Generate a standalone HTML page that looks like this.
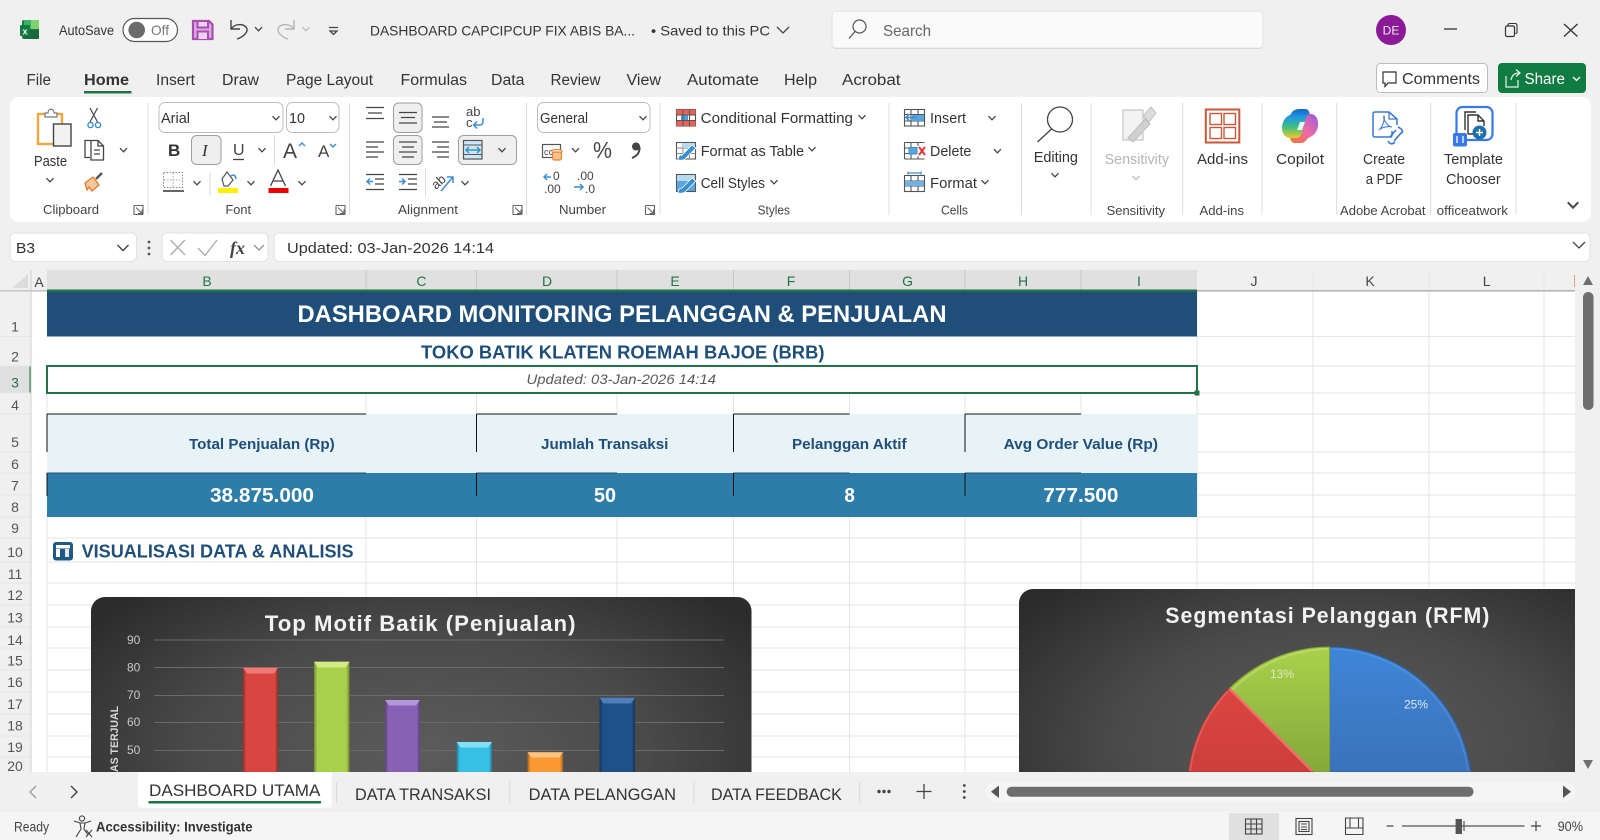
<!DOCTYPE html>
<html lang="en">
<head>
<meta charset="utf-8">
<title>DASHBOARD CAPCIPCUP - Excel</title>
<style>
html,body{margin:0;padding:0;width:1600px;height:840px;overflow:hidden;background:#f0f0f0}
svg{display:block}
text{font-family:"Liberation Sans",Arial,sans-serif;fill:#333;white-space:pre}
.s{font-size:14px}
.m{font-size:15.5px}
.r{font-size:15px}
.g{font-size:13px;fill:#444}
.h{font-size:14px;fill:#444;text-anchor:middle}
.hs{font-size:14px;fill:#217346;text-anchor:middle}
.n{font-size:14px;fill:#555;text-anchor:middle}
.b{font-weight:bold}
.kh{font-size:14.5px;font-weight:bold;fill:#1f4e79}
.kv{font-size:20px;font-weight:bold;fill:#fff}
.ax{font-size:12px;fill:#c8c8c8}
.tab{font-size:17px;fill:#333}
.ln{fill:none;stroke:#444;stroke-width:1.3}
.bl{fill:none;stroke:#3a8fd0;stroke-width:1.5}
</style>
</head>
<body>
<svg xmlns="http://www.w3.org/2000/svg" width="1600" height="840" viewBox="0 0 1600 840">
<defs>
<path id="ch" d="M-3.5 -1.8 L0 1.8 L3.5 -1.8" fill="none" stroke="#444" stroke-width="1.3"/>
<path id="chg" d="M-3.5 -1.8 L0 1.8 L3.5 -1.8" fill="none" stroke="#bbb" stroke-width="1.2"/>
<path id="lau" d="M0 0 H9 V9 M0 0 V9 H9 M2 2 L8 8 M8 4 V8 H4" fill="none" stroke="#666" stroke-width="1.1"/>
<radialGradient id="cbg1" gradientUnits="userSpaceOnUse" cx="0" cy="0" r="1" gradientTransform="translate(421 752) scale(410 214)">
<stop offset="0" stop-color="#5c5c5c"/><stop offset=".55" stop-color="#4a4a4a"/><stop offset="1" stop-color="#2c2c2c"/>
</radialGradient>
<radialGradient id="cbg2" gradientUnits="userSpaceOnUse" cx="0" cy="0" r="1" gradientTransform="translate(1330 744) scale(386 214)">
<stop offset="0" stop-color="#5c5c5c"/><stop offset=".55" stop-color="#4a4a4a"/><stop offset="1" stop-color="#2c2c2c"/>
</radialGradient>
<linearGradient id="edge" x1="0" x2="1" y1="0" y2="0">
<stop offset="0" stop-color="#000" stop-opacity=".34"/><stop offset=".09" stop-color="#000" stop-opacity="0"/>
<stop offset=".91" stop-color="#000" stop-opacity="0"/><stop offset="1" stop-color="#000" stop-opacity=".34"/>
</linearGradient>
<linearGradient id="pb" x1="0" x2="0" y1="0" y2="1"><stop offset="0" stop-color="#3f86d8"/><stop offset="1" stop-color="#3a72ba"/></linearGradient>
<linearGradient id="pg" x1="0" x2="0" y1="0" y2="1"><stop offset="0" stop-color="#aad14c"/><stop offset="1" stop-color="#86a83a"/></linearGradient>
<linearGradient id="pr" x1="0" x2="0" y1="0" y2="1"><stop offset="0" stop-color="#dc4540"/><stop offset="1" stop-color="#cc3f3c"/></linearGradient>
<linearGradient id="ca" x1="0" x2="0" y1="0" y2="1"><stop offset="0" stop-color="#1565c8"/><stop offset=".25" stop-color="#1f9ae0"/><stop offset=".55" stop-color="#45c27a"/><stop offset=".85" stop-color="#ecc92e"/><stop offset="1" stop-color="#f08b2b"/></linearGradient>
<linearGradient id="cb" x1="1" x2="0" y1="0" y2="1"><stop offset="0" stop-color="#9a5bde"/><stop offset=".5" stop-color="#ef6aa6"/><stop offset="1" stop-color="#f4772f"/></linearGradient>
<clipPath id="sheet"><rect x="47" y="292" width="1528" height="480"/></clipPath>
</defs>

<rect width="1600" height="840" fill="#f0f0f0"/>

<!-- Title bar -->
<rect x="22" y="20" width="17" height="19" rx="2" fill="#1d7a45"/>
<rect x="30" y="20" width="9" height="9" rx="1" fill="#7ed26f"/>
<rect x="24" y="20" width="7" height="9" fill="#3fb061"/>
<rect x="24" y="30" width="15" height="9" rx="1" fill="#1a6a3e"/>
<rect x="20" y="25" width="10" height="11" rx="1" fill="#117a43"/>
<text x="22.5" y="34.5" style="font-size:9px;font-weight:bold;fill:#fff">x</text>
<text class="s" x="59" y="35" textLength="55" lengthAdjust="spacingAndGlyphs">AutoSave</text>
<rect x="123" y="18.5" width="54.5" height="23" rx="11.5" fill="#fff" stroke="#555" stroke-width="1.2"/>
<circle cx="136.7" cy="30" r="8.3" fill="#6b6b6b"/>
<text x="151" y="35" style="font-size:14px;fill:#777" textLength="18" lengthAdjust="spacingAndGlyphs">Off</text>
<path d="M193 21 H209 L212.5 24.5 V39 H193 Z" fill="#dba9e2" stroke="#a94db2" stroke-width="2.2"/>
<path d="M197.5 21 H208 V27.5 H197.5 Z M197.5 39 V31.5 H208 V39" fill="#eed4f1" stroke="#a94db2" stroke-width="2"/>
<path d="M231 20 V29 H240 M231 29 C236 22 247 24 247 30 C247 33 243 37 237 39" fill="none" stroke="#444" stroke-width="1.4"/>
<use href="#ch" x="258.5" y="29"/>
<path d="M294 20 V29 H285 M294 29 C289 22 278 24 278 30 C278 33 282 37 288 39" fill="none" stroke="#b5b5b5" stroke-width="1.4"/>
<use href="#chg" x="306" y="29"/>
<path d="M329 27.5 H338 M330 31 H337 L333.5 34.5 Z" fill="none" stroke="#444" stroke-width="1.3"/>
<text class="s" x="370" y="35.5" textLength="265" lengthAdjust="spacingAndGlyphs">DASHBOARD CAPCIPCUP FIX ABIS BA...</text>
<text class="s" x="651" y="35.5" textLength="119" lengthAdjust="spacingAndGlyphs">• Saved to this PC</text>
<path d="M777 27 L783 33 L789 27" fill="none" stroke="#444" stroke-width="1.3"/>

<rect x="832" y="12" width="431" height="37" rx="4" fill="#d0d0d0"/>
<rect x="832" y="11" width="431" height="37" rx="4" fill="#fafafa" stroke="#e2e2e2"/>
<circle cx="859.5" cy="26.5" r="6.5" fill="none" stroke="#555" stroke-width="1.2"/>
<path d="M855 31.5 L849 38.5" stroke="#555" stroke-width="1.3"/>
<text x="883" y="36" style="font-size:16px;fill:#666" textLength="48" lengthAdjust="spacingAndGlyphs">Search</text>
<circle cx="1391" cy="30" r="15" fill="#8a1a98"/>
<text x="1391" y="34.5" style="font-size:12px;fill:#eee;text-anchor:middle">DE</text>
<path d="M1444 29 H1457" stroke="#333" stroke-width="1.3"/>
<rect x="1505.5" y="26" width="9" height="10.5" rx="1.5" fill="none" stroke="#333" stroke-width="1.2"/>
<path d="M1508 25.5 V24.8 Q1508 23.5 1510 23.5 H1515 Q1517 23.5 1517 25.5 V32 Q1517 33.5 1515.5 33.5" fill="none" stroke="#333" stroke-width="1.1"/>
<path d="M1564 24 L1577.5 36.5 M1577.5 24 L1564 36.5" stroke="#333" stroke-width="1.3"/>

<!-- Menu -->
<text class="m" x="26.5" y="85" textLength="24.5" lengthAdjust="spacingAndGlyphs">File</text>
<text class="m b" x="84" y="85" textLength="45" lengthAdjust="spacingAndGlyphs">Home</text>
<rect x="84" y="91" width="47.5" height="2.5" fill="#217346"/>
<text class="m" x="156" y="85" textLength="39" lengthAdjust="spacingAndGlyphs">Insert</text>
<text class="m" x="222" y="85" textLength="37" lengthAdjust="spacingAndGlyphs">Draw</text>
<text class="m" x="286" y="85" textLength="87" lengthAdjust="spacingAndGlyphs">Page Layout</text>
<text class="m" x="400.5" y="85" textLength="66.5" lengthAdjust="spacingAndGlyphs">Formulas</text>
<text class="m" x="491" y="85" textLength="33.5" lengthAdjust="spacingAndGlyphs">Data</text>
<text class="m" x="550.5" y="85" textLength="50" lengthAdjust="spacingAndGlyphs">Review</text>
<text class="m" x="626.5" y="85" textLength="34.5" lengthAdjust="spacingAndGlyphs">View</text>
<text class="m" x="687" y="85" textLength="72" lengthAdjust="spacingAndGlyphs">Automate</text>
<text class="m" x="784" y="85" textLength="33" lengthAdjust="spacingAndGlyphs">Help</text>
<text class="m" x="842" y="85" textLength="58.5" lengthAdjust="spacingAndGlyphs">Acrobat</text>

<rect x="1376.5" y="63.5" width="111" height="29" rx="4" fill="#fff" stroke="#bdbdbd"/>
<path d="M1383 72 H1396 V83 H1388 L1385 86.5 V83 H1383 Z" fill="none" stroke="#333" stroke-width="1.2"/>
<text class="m" x="1402" y="84" textLength="78" lengthAdjust="spacingAndGlyphs">Comments</text>
<rect x="1498" y="63" width="88" height="30" rx="4" fill="#107c41"/>
<path d="M1506 76 V87 H1518 V80 M1511 80 C1512 75 1515 73 1519 73 M1516 69.5 L1520 73 L1516 76.5" fill="none" stroke="#e8f3ec" stroke-width="1.2"/>
<text class="m" x="1524.5" y="84" style="fill:#fff" textLength="40.5" lengthAdjust="spacingAndGlyphs">Share</text>
<path d="M1573 77 L1576.5 80.5 L1580 77" fill="none" stroke="#fff" stroke-width="1.3"/>

<!-- Ribbon -->
<rect x="10" y="97" width="1581" height="125" rx="9" fill="#fff"/>
<g stroke="#dcdcdc" stroke-width="1">
<path d="M148 103 V215 M349.5 103 V215 M526.5 103 V215 M660 103 V215 M889 103 V215 M1021.5 103 V215 M1091 103 V215 M1182.6 103 V215 M1262 103 V215 M1336.7 103 V215 M1430.6 103 V215 M1516 103 V215"/>
<path d="M274.5 135 V165 M210 172 V196 M425.5 168 V196"/>
</g>
<g class="gl">
<text class="g" x="43" y="214" textLength="56" lengthAdjust="spacingAndGlyphs">Clipboard</text>
<text class="g" x="225.5" y="214" textLength="25.5" lengthAdjust="spacingAndGlyphs">Font</text>
<text class="g" x="398" y="214" textLength="60" lengthAdjust="spacingAndGlyphs">Alignment</text>
<text class="g" x="559" y="214" textLength="47" lengthAdjust="spacingAndGlyphs">Number</text>
<text class="g" x="757.6" y="214.5" textLength="32.4" lengthAdjust="spacingAndGlyphs">Styles</text>
<text class="g" x="941" y="214.5" textLength="27" lengthAdjust="spacingAndGlyphs">Cells</text>
<text class="g" x="1106.6" y="215" textLength="58.4" lengthAdjust="spacingAndGlyphs">Sensitivity</text>
<text class="g" x="1199.5" y="215" textLength="44.5" lengthAdjust="spacingAndGlyphs">Add-ins</text>
<text class="g" x="1340" y="215" textLength="85.5" lengthAdjust="spacingAndGlyphs">Adobe Acrobat</text>
<text class="g" x="1436.7" y="215" textLength="71.3" lengthAdjust="spacingAndGlyphs">officeatwork</text>
</g>
<use href="#lau" x="134" y="205.5"/><use href="#lau" x="336" y="205.5"/><use href="#lau" x="513" y="205.5"/><use href="#lau" x="645.5" y="205.5"/>
<use href="#ch" x="1573" y="205" transform="translate(-786.5 -102.5) scale(1.5)"/>

<!-- Clipboard -->
<rect x="38" y="114" width="24" height="30" fill="#fff" stroke="#f0a63c" stroke-width="2.4"/>
<path d="M45 117 V113 H48 C48 108 54 108 54 113 H57 V117 Z" fill="#fff" stroke="#777" stroke-width="1.2"/>
<rect x="53.5" y="124" width="17.5" height="22" fill="#f2f2f2" stroke="#444" stroke-width="1.4"/>
<text class="r" x="34" y="166" textLength="33" lengthAdjust="spacingAndGlyphs">Paste</text>
<use href="#ch" x="50" y="180"/>
<path d="M90 108 L97.5 122 M97.5 108 L90 122" stroke="#444" stroke-width="1.2"/>
<circle cx="90.5" cy="125" r="2.6" fill="none" stroke="#3a8fd0" stroke-width="1.4"/><circle cx="98" cy="125" r="2.6" fill="none" stroke="#3a8fd0" stroke-width="1.4"/>
<path d="M90.5 140.5 H85 V157.5 H90" class="ln"/>
<path d="M91 140.5 H98 L103.5 146 V160 H91 Z M98 141 V146 H103 M94 150 H100 M94 154 H100" class="ln"/>
<use href="#ch" x="123.5" y="150"/>
<path d="M85 183 L93 177 L99 185 L92 191 L89 187 L87 190 Z" fill="#f6c79a" stroke="#e07a2e" stroke-width="1.3"/>
<path d="M96 179 L102 173" stroke="#555" stroke-width="2.4"/>

<!-- Font -->
<rect x="159" y="102.5" width="124" height="30" rx="6" fill="#fff" stroke="#bdbdbd"/>
<text class="r" x="161" y="123" textLength="29" lengthAdjust="spacingAndGlyphs">Arial</text>
<use href="#ch" x="276" y="118"/>
<rect x="286.5" y="102.5" width="52.5" height="30" rx="6" fill="#fff" stroke="#bdbdbd"/>
<text class="r" x="289" y="123" textLength="16" lengthAdjust="spacingAndGlyphs">10</text>
<use href="#ch" x="333" y="118"/>
<text x="168" y="156" style="font-size:17px;font-weight:bold;fill:#333">B</text>
<rect x="191.5" y="135.5" width="29.5" height="29" rx="5" fill="#efefef" stroke="#9e9e9e"/>
<text x="202" y="156" style="font-size:17px;font-style:italic;font-family:'Liberation Serif',serif;fill:#333">I</text>
<text x="233" y="155" style="font-size:16px;fill:#444">U</text>
<path d="M233 159.5 H244" stroke="#444" stroke-width="1.3"/>
<use href="#ch" x="262" y="150"/>
<text x="283" y="158" style="font-size:21px;fill:#444">A</text>
<path d="M299 146 L302 143 L305 146" fill="none" stroke="#3a8fd0" stroke-width="1.4"/>
<text x="318" y="157" style="font-size:17px;fill:#444">A</text>
<path d="M330 144 L333 147 L336 144" fill="none" stroke="#3a8fd0" stroke-width="1.4"/>
<rect x="163.5" y="172.5" width="19" height="15" fill="none" stroke="#888" stroke-dasharray="1.5 1.5"/>
<path d="M173 173 V187 M164 180 H182" stroke="#aaa" stroke-dasharray="1.5 1.5"/>
<path d="M163 191 H184" stroke="#333" stroke-width="1.6"/>
<use href="#ch" x="197" y="183"/>
<path d="M222 179 L227 172 L233 180 L228 186 H224 Z" fill="#fff" stroke="#555" stroke-width="1.2"/>
<path d="M231 176 Q235 173 236 179" fill="none" stroke="#3a8fd0" stroke-width="1.6"/>
<rect x="218" y="188" width="20" height="5" fill="#ffef00"/>
<use href="#ch" x="251" y="183"/>
<path d="M270.5 186 L278 170 L285.5 186 M273 181 H283" fill="none" stroke="#444" stroke-width="1.3"/>
<rect x="268.5" y="188" width="20" height="5" fill="#ee0000"/>
<use href="#ch" x="302" y="183"/>

<!-- Alignment -->
<rect x="393.5" y="103" width="28.5" height="29.5" rx="5" fill="#efefef" stroke="#9e9e9e"/>
<rect x="393.5" y="135.5" width="28.5" height="29" rx="5" fill="#efefef" stroke="#9e9e9e"/>
<rect x="458.5" y="135.5" width="58" height="29" rx="5" fill="#efefef" stroke="#9e9e9e"/>
<g stroke="#444" stroke-width="1.2">
<path d="M366 107.5 H384 M368 113 H382 M366 118.5 H384"/>
<path d="M399 112.5 H417 M401 117.5 H415 M399 123 H417"/>
<path d="M432 117 H449 M434 122 H447 M432 127 H449"/>
<path d="M366 142 H384 M366 147 H378 M366 152 H384 M366 157 H378"/>
<path d="M399 142 H417 M402 147 H414 M399 152 H417 M402 157 H414"/>
<path d="M432 142 H449 M437 147 H449 M432 152 H449 M437 157 H449"/>
<path d="M366 174.5 H384 M375 179 H384 M375 184 H384 M366 189.5 H384"/>
<path d="M399 174.5 H417 M408 179 H417 M408 184 H417 M399 189.5 H417"/>
</g>
<path d="M373 181.5 H367 M370 178.5 L367 181.5 L370 184.5" class="bl"/>
<path d="M399 181.5 H405 M402 178.5 L405 181.5 L402 184.5" class="bl"/>
<text x="466" y="116" style="font-size:13px;fill:#444">ab</text>
<text x="466" y="127" style="font-size:13px;fill:#444">c</text>
<path d="M483 118 V122 Q483 125 479 125 H474 M477 121.5 L473.5 125 L477 128.5" class="bl"/>
<rect x="463.5" y="140.5" width="18.5" height="18.5" fill="#cfe6f6" stroke="#555" stroke-width="1.2"/>
<path d="M463.5 145 H482 M463.5 154.5 H482" stroke="#555"/>
<path d="M466 150 H480 M469 147 L466 150 L469 153 M477 147 L480 150 L477 153" class="bl"/>
<use href="#ch" x="502" y="150"/>
<text x="436" y="190" transform="rotate(-42 436 190)" style="font-size:13px;fill:#444">ab</text>
<path d="M441 191 L453 177 M447 177 H453 V183" class="bl"/>
<use href="#ch" x="465" y="183"/>

<!-- Number -->
<rect x="537.5" y="102.5" width="112.5" height="30" rx="6" fill="#fff" stroke="#bdbdbd"/>
<text class="r" x="540" y="123" textLength="48" lengthAdjust="spacingAndGlyphs">General</text>
<use href="#ch" x="643" y="118"/>
<rect x="542.5" y="144.5" width="18" height="13" fill="#fff" stroke="#555" stroke-width="1.2"/>
<text x="544" y="155" style="font-size:9px;fill:#444">ccc</text>
<ellipse cx="557" cy="151.5" rx="5" ry="2" fill="#fff" stroke="#e8842c" stroke-width="1.2"/>
<rect x="552.5" y="152" width="9" height="8" rx="2" fill="#f9c28f" stroke="#e8842c" stroke-width="1.2"/>
<use href="#ch" x="575.5" y="150"/>
<text x="593" y="158" style="font-size:23px;fill:#444" textLength="19" lengthAdjust="spacingAndGlyphs">%</text>
<circle cx="636" cy="146.5" r="4" fill="#444"/>
<path d="M639.5 147 C640 152 637 156 632 158" fill="none" stroke="#444" stroke-width="2"/>
<path d="M551 177 H544 M547 174 L544 177 L547 180" class="bl"/>
<text x="553" y="180" style="font-size:12px;fill:#444">0</text>
<text x="544" y="193" style="font-size:12px;fill:#444">.00</text>
<text x="577" y="180" style="font-size:12px;fill:#444">.00</text>
<path d="M574 187 H583 M580 184 L583 187 L580 190" class="bl"/>
<text x="585" y="193" style="font-size:12px;fill:#444">.0</text>

<!-- Styles -->
<g fill="none" stroke="#555" stroke-width="1.1">
<rect x="676.5" y="109.5" width="19" height="16.5" fill="#fff"/>
<rect x="676.5" y="142.5" width="19" height="16.5" fill="#fff"/>
<rect x="676.5" y="174.5" width="19" height="17"/>
</g>
<rect x="676.5" y="109.5" width="19" height="5" fill="#e8605a"/>
<rect x="676.5" y="120.5" width="19" height="5.5" fill="#e8605a"/>
<rect x="681" y="114.5" width="7" height="6" fill="#4a9ed8"/>
<path d="M683 109.5 V126 M689.5 109.5 V126 M676.5 115 H695.5 M676.5 120.5 H695.5" stroke="#555" fill="none"/>
<path d="M683 142.5 V159 M689.5 142.5 V159 M676.5 148 H695.5 M676.5 153.5 H695.5" stroke="#888" fill="none"/>
<rect x="683" y="143" width="12" height="5" fill="#b7d8f0"/>
<path d="M678 160 Q678 155 682 155 L692 145 L696 148 L686 158 Q684 161 678 160 Z" fill="#3a8fd0" stroke="#fff" stroke-width=".8"/>
<rect x="677" y="175" width="18" height="6" fill="#b7d8f0"/>
<rect x="677" y="181" width="18" height="10" fill="#5aa5de"/>
<path d="M678 193 Q678 188 682 188 L692 178 L696 181 L686 191 Q684 194 678 193 Z" fill="#3a8fd0" stroke="#fff" stroke-width=".8"/>
<text class="r" x="700.7" y="123" textLength="152.3" lengthAdjust="spacingAndGlyphs">Conditional Formatting</text>
<use href="#ch" x="862" y="117"/>
<text class="r" x="700.7" y="156" textLength="103.3" lengthAdjust="spacingAndGlyphs">Format as Table</text>
<use href="#ch" x="812" y="149"/>
<text class="r" x="700.7" y="188" textLength="64.3" lengthAdjust="spacingAndGlyphs">Cell Styles</text>
<use href="#ch" x="774" y="182"/>

<!-- Cells -->
<g fill="none" stroke="#555" stroke-width="1.1">
<rect x="904.5" y="109.5" width="20" height="16.5"/>
<path d="M904.5 114.5 H924.5 M904.5 121 H924.5 M911 109.5 V126 M918 109.5 V126"/>
<path d="M904.5 142.5 H924.5 M904.5 159 H924.5 M904.5 142.5 V159 M904.5 148 H910 M904.5 153.5 H910 M911 142.5 V148 M918 142.5 V146 M911 154 V159 M918 156 V159"/>
<rect x="904.5" y="175.5" width="20" height="16"/>
<path d="M904.5 181 H924.5 M904.5 186 H924.5 M911 175.5 V191.5 M918 175.5 V191.5"/>
</g>
<rect x="912" y="115" width="12" height="6" fill="#5aa5de"/>
<path d="M917 117.5 H906 M909.5 114 L906 117.5 L909.5 121" fill="none" stroke="#3a8fd0" stroke-width="1.6"/>
<rect x="909" y="147.5" width="8" height="6.5" fill="#5aa5de" stroke="#3a8fd0"/>
<path d="M919 147 L925 155 M925 147 L919 155" stroke="#e0312a" stroke-width="1.9"/>
<rect x="905" y="181" width="19" height="5" fill="#6fb2e6"/>
<path d="M908 173 H921 M908 171.5 V174.5 M921 171.5 V174.5" stroke="#3a8fd0" stroke-width="1.2" fill="none"/>
<text class="r" x="930" y="123" textLength="36" lengthAdjust="spacingAndGlyphs">Insert</text>
<use href="#ch" x="992" y="118"/>
<text class="r" x="930" y="156" textLength="41.4" lengthAdjust="spacingAndGlyphs">Delete</text>
<use href="#ch" x="997.4" y="151"/>
<text class="r" x="930" y="188" textLength="47" lengthAdjust="spacingAndGlyphs">Format</text>
<use href="#ch" x="985" y="182"/>

<!-- Editing -->
<circle cx="1060" cy="119.5" r="12.5" fill="none" stroke="#444" stroke-width="1.3"/>
<path d="M1051.5 129 L1037.5 142" stroke="#444" stroke-width="1.4"/>
<text class="r" x="1033.7" y="162" textLength="44.3" lengthAdjust="spacingAndGlyphs">Editing</text>
<use href="#ch" x="1055" y="175"/>

<!-- Sensitivity -->
<path d="M1123 110 H1143 V140 H1123 Z" fill="#f3f3f3" stroke="#c6c6c6" stroke-width="1.2"/>
<path d="M1128 138 L1145 119 L1150 124 L1133 142 Z" fill="#d0d0d0" stroke="#bdbdbd"/>
<path d="M1143 116 L1151 107 L1156 113 L1149 122 Z" fill="#dcdcdc" stroke="#c2c2c2"/>
<text class="r" x="1104.6" y="164" style="fill:#b5b5b5" textLength="64.4" lengthAdjust="spacingAndGlyphs">Sensitivity</text>
<use href="#chg" x="1136" y="178"/>

<!-- Add-ins -->
<rect x="1205.8" y="109.5" width="33.5" height="33" fill="none" stroke="#c9573a" stroke-width="2"/>
<rect x="1210" y="113.5" width="11.5" height="11" fill="none" stroke="#c9573a" stroke-width="1.4"/>
<rect x="1224" y="113.5" width="11.5" height="11" fill="none" stroke="#c9573a" stroke-width="1.4"/>
<rect x="1210" y="127.5" width="11.5" height="11" fill="none" stroke="#c9573a" stroke-width="1.4"/>
<rect x="1224" y="127.5" width="11.5" height="11" fill="none" stroke="#c9573a" stroke-width="1.4"/>
<text class="r" x="1197" y="164" textLength="51" lengthAdjust="spacingAndGlyphs">Add-ins</text>

<!-- Copilot -->
<g transform="translate(1282 109)">
<path d="M13 1 C15 0 17 0 20 0 H23 C26 0 27 2 28 5 C34 5 36 10 36 15 C36 21 33 26 28 28 C25 29 24 33 20 34 H13 C10 34 9 32 8 29 C3 29 0 24 0 19 C0 13 3 8 8 6 C10 4 10 2 13 1 Z" fill="url(#ca)"/>
<path d="M28 5 C34 5 36 10 36 15 C36 21 33 26 28 28 C25 29 24 33 20 34 H13 C10 34 9 32 8 29 L15 29 C19 29 20 24 21 20 L24 8 C25 6 26 5 28 5Z" fill="url(#cb)"/>
<path d="M18 13 H23 L20 21 H15 Z" fill="#fff" opacity=".9"/>
</g>
<text class="r" x="1276" y="164" textLength="48" lengthAdjust="spacingAndGlyphs">Copilot</text>

<!-- Create PDF -->
<path d="M1392 131 V135 Q1392 137 1390 137 H1375 Q1373 137 1373 135 V114 Q1373 112 1375 112 H1389 L1397 119 V125" fill="none" stroke="#3a78d0" stroke-width="1.5"/>
<path d="M1389 112 V119 H1397" fill="none" stroke="#3a78d0" stroke-width="1.2"/>
<path d="M1379 130 C1383 127 1385 118 1384 116 C1383 118 1386 126 1392 127 C1389 126 1382 127 1379 130Z" fill="none" stroke="#3a78d0" stroke-width="1.1"/>
<path d="M1390 137 L1396 130 M1394 141 L1402 132 M1398 127 Q1404 130 1402 133 M1388 141 Q1391 146 1395 142" fill="none" stroke="#3a78d0" stroke-width="1.6"/>
<text class="r" x="1363" y="164" textLength="42" lengthAdjust="spacingAndGlyphs">Create</text>
<text class="r" x="1365.7" y="184" textLength="37" lengthAdjust="spacingAndGlyphs">a PDF</text>

<!-- Template -->
<rect x="1456.5" y="107" width="36" height="33" rx="6" fill="#fff" stroke="#3b78e7" stroke-width="2.2"/>
<path d="M1465 130 V112 H1476 M1468 134 V115 H1478 L1484 121 V126 M1478 115 V121 H1484 M1468 134 H1473" fill="none" stroke="#333" stroke-width="1.4"/>
<circle cx="1479.5" cy="132.5" r="7" fill="#1f6fa8"/>
<path d="M1476 132.5 H1483 M1479.5 129 V136" stroke="#fff" stroke-width="1.5"/>
<rect x="1453" y="133" width="14" height="13.5" rx="2" fill="#3b78e7"/>
<path d="M1457 136 V143 M1463 136 V143" stroke="#fff" stroke-width="1.3"/>
<text class="r" x="1444" y="164" textLength="59" lengthAdjust="spacingAndGlyphs">Template</text>
<text class="r" x="1446" y="184" textLength="54.7" lengthAdjust="spacingAndGlyphs">Chooser</text>

<!-- Formula bar -->
<rect x="10" y="233" width="126.5" height="28.5" rx="5" fill="#fff" stroke="#e2e2e2"/>
<text x="16" y="253" style="font-size:15px;fill:#333" textLength="19" lengthAdjust="spacingAndGlyphs">B3</text>
<path d="M117.5 245 L123 250.5 L128.5 245" fill="none" stroke="#444" stroke-width="1.4"/>
<g fill="#555"><circle cx="149" cy="242" r="1.4"/><circle cx="149" cy="248" r="1.4"/><circle cx="149" cy="254" r="1.4"/></g>
<rect x="162" y="233" width="106" height="28.5" rx="5" fill="#fff" stroke="#e2e2e2"/>
<path d="M170.5 240 L185 255 M185 240 L170.5 255" stroke="#aaa" stroke-width="1.3"/>
<path d="M198 248 L205 255.5 L217 240" fill="none" stroke="#aaa" stroke-width="1.3"/>
<text x="230" y="254" style="font-size:18px;font-style:italic;font-weight:bold;font-family:'Liberation Serif',serif;fill:#444">fx</text>
<path d="M254 245 L259 250 L264 245" fill="none" stroke="#888" stroke-width="1.2"/>
<rect x="274" y="233" width="1316" height="28.5" rx="5" fill="#fff" stroke="#e2e2e2"/>
<text x="287" y="253" style="font-size:15px;fill:#333" textLength="207" lengthAdjust="spacingAndGlyphs">Updated: 03-Jan-2026 14:14</text>
<path d="M1573 242 L1579 248 L1585 242" fill="none" stroke="#444" stroke-width="1.3"/>

<!-- Sheet -->
<rect x="0" y="270" width="1575" height="22" fill="#f0f0f0"/>
<rect x="47" y="270" width="1150" height="20" fill="#e0e0e0"/>
<rect x="0" y="292" width="31" height="480" fill="#f0f0f0"/>
<rect x="31" y="292" width="1544" height="480" fill="#fff"/>
<path d="M28 274 V288 H12 Z" fill="#dcdcdc"/>
<rect x="0" y="366" width="30" height="27" fill="#e0e0e0"/>
<rect x="29.5" y="366" width="2" height="27" fill="#217346"/>

<!-- Grid lines -->
<g stroke="#e6e6e6" stroke-width="1" shape-rendering="crispEdges">
<path d="M1197 292 V772 M1313 270 V772 M1429 270 V772 M1544 270 V772"/>
<path d="M47 393 V414 M366 393 V414 M476.5 393 V414 M617 393 V414 M733.7 393 V414 M849.5 393 V414 M965 393 V414 M1081 393 V414"/>
<path d="M47 517 V772 M366 517 V772 M476.5 517 V772 M617 517 V772 M733.7 517 V772 M849.5 517 V772 M965 517 V772 M1081 517 V772"/>
<path d="M1197 336.5 H1575 M1197 366 H1575 M1197 393 H1575 M1197 414 H1575 M1197 452 H1575 M1197 473 H1575 M1197 495 H1575 M1197 517 H1575"/>
<path d="M47 538 H1575 M47 562 H1575 M47 583 H1575 M47 605 H1575 M47 627 H1575 M47 648 H1575 M47 670 H1575 M47 692 H1575 M47 714 H1575 M47 736 H1575 M47 757 H1575"/>
<path d="M0 336.5 H31 M0 366 H31 M0 393 H31 M0 414 H31 M0 452 H31 M0 473 H31 M0 495 H31 M0 517 H31 M0 538 H31 M0 562 H31 M0 583 H31 M0 605 H31 M0 627 H31 M0 648 H31 M0 670 H31 M0 692 H31 M0 714 H31 M0 736 H31 M0 757 H31"/>
<path d="M366 270 V290 M476.5 270 V290 M617 270 V290 M733.7 270 V290 M849.5 270 V290 M965 270 V290 M1081 270 V290" stroke="#c8c8c8"/>
<path d="M31 270 V772" stroke="#cfcfcf"/>
</g>
<rect x="1197" y="290" width="378" height="1.5" fill="#b5b5b5"/>
<rect x="0" y="290" width="47" height="1.5" fill="#c5c5c5"/>

<!-- Header letters -->
<text class="h" x="39" y="287">A</text>
<text class="hs" x="207" y="286">B</text><text class="hs" x="421.4" y="286">C</text><text class="hs" x="547" y="286">D</text>
<text class="hs" x="675" y="286">E</text><text class="hs" x="791" y="286">F</text><text class="hs" x="907.6" y="286">G</text>
<text class="hs" x="1023" y="286">H</text><text class="hs" x="1139" y="286">I</text>
<text class="h" x="1254" y="286">J</text><text class="h" x="1370" y="286">K</text><text class="h" x="1486.7" y="286">L</text>
<rect x="1574" y="275" width="1" height="12" fill="#e8a070"/>

<!-- Row numbers -->
<text class="n" x="15" y="331.5">1</text><text class="n" x="15" y="361.5">2</text>
<text class="n" x="15" y="387.5" style="fill:#217346">3</text><text class="n" x="15" y="410">4</text>
<text class="n" x="15" y="447">5</text><text class="n" x="15" y="469">6</text>
<text class="n" x="15" y="490.5">7</text><text class="n" x="15" y="512">8</text>
<text class="n" x="15" y="533">9</text><text class="n" x="15" y="557">10</text>
<text class="n" x="15" y="579">11</text><text class="n" x="15" y="600">12</text>
<text class="n" x="15" y="622.5">13</text><text class="n" x="15" y="645">14</text>
<text class="n" x="15" y="665.5">15</text><text class="n" x="15" y="687">16</text>
<text class="n" x="15" y="709">17</text><text class="n" x="15" y="730.5">18</text>
<text class="n" x="15" y="752">19</text><text class="n" x="15" y="771">20</text>

<!-- Dashboard cells -->
<rect x="47" y="292" width="1150" height="44.5" fill="#1f4e79"/>
<rect x="47" y="289.5" width="1150" height="2.5" fill="#217346"/>
<text x="297.5" y="322" style="font-size:24px;font-weight:bold;fill:#fff" textLength="649" lengthAdjust="spacingAndGlyphs">DASHBOARD MONITORING PELANGGAN &amp; PENJUALAN</text>
<text x="421" y="358.5" style="font-size:18px;font-weight:bold;fill:#1f4e79" textLength="403.5" lengthAdjust="spacingAndGlyphs">TOKO BATIK KLATEN ROEMAH BAJOE (BRB)</text>
<rect x="47" y="366" width="1150" height="27" fill="#fff" stroke="#217346" stroke-width="2"/>
<rect x="1194.5" y="390.5" width="5" height="5" fill="#217346"/>
<text x="526.5" y="384" style="font-size:14px;font-style:italic;fill:#595959" textLength="189.5" lengthAdjust="spacingAndGlyphs">Updated: 03-Jan-2026 14:14</text>

<rect x="47" y="414" width="1150" height="59" fill="#e8f3f8"/>
<rect x="47" y="473" width="1150" height="44" fill="#2e7ca8"/>
<g stroke="#111" stroke-width="1" fill="none" shape-rendering="crispEdges">
<path d="M47 414 H366 M476.5 414 H617 M733.7 414 H849.5 M965 414 H1081"/>
<path d="M47 414 V452 M476.5 414 V452 M733.7 414 V452 M965 414 V452"/>
<path d="M47 473 H366 M476.5 473 H617 M733.7 473 H849.5 M965 473 H1081" stroke="#27516d"/>
<path d="M47 473 V496 M476.5 473 V496 M733.7 473 V496 M965 473 V496"/>
</g>
<text class="kh" x="189" y="449" textLength="145.7" lengthAdjust="spacingAndGlyphs">Total Penjualan (Rp)</text>
<text class="kh" x="541" y="449" textLength="127.4" lengthAdjust="spacingAndGlyphs">Jumlah Transaksi</text>
<text class="kh" x="792" y="449" textLength="114.6" lengthAdjust="spacingAndGlyphs">Pelanggan Aktif</text>
<text class="kh" x="1003.6" y="449" textLength="154.4" lengthAdjust="spacingAndGlyphs">Avg Order Value (Rp)</text>
<text class="kv" x="210" y="502" textLength="104" lengthAdjust="spacingAndGlyphs">38.875.000</text>
<text class="kv" x="594" y="502" textLength="22" lengthAdjust="spacingAndGlyphs">50</text>
<text class="kv" x="844.4" y="502" textLength="10.5" lengthAdjust="spacingAndGlyphs">8</text>
<text class="kv" x="1043.4" y="502" textLength="75" lengthAdjust="spacingAndGlyphs">777.500</text>

<rect x="53" y="542" width="20" height="18.5" rx="3" fill="#1f5a85"/>
<rect x="56" y="545" width="14" height="3.5" fill="#fff"/>
<rect x="56" y="549" width="4" height="8" fill="#fff"/><rect x="65" y="549" width="4" height="8" fill="#dfeaf2"/>
<text x="81.6" y="557.5" style="font-size:18.5px;font-weight:bold;fill:#1f4e79" textLength="272" lengthAdjust="spacingAndGlyphs">VISUALISASI DATA &amp; ANALISIS</text>

<!-- Charts -->
<g clip-path="url(#sheet)">
<path d="M91 772 V611 A14 14 0 0 1 105 597 H737.5 A14 14 0 0 1 751.5 611 V772 Z" fill="url(#cbg1)"/>
<g stroke="#6a6a6a" stroke-width="1" shape-rendering="crispEdges"><path d="M154 640 H724 M154 667.7 H724 M154 695.3 H724 M154 722.3 H724 M154 750.3 H724"/></g>
<text x="264.8" y="631" style="font-size:22px;font-weight:bold;fill:#f2f2f2;letter-spacing:1px" textLength="311.7" lengthAdjust="spacingAndGlyphs">Top Motif Batik (Penjualan)</text>
<text class="ax" x="127" y="644">90</text><text class="ax" x="127" y="671.5">80</text><text class="ax" x="127" y="699">70</text><text class="ax" x="127" y="726">60</text><text class="ax" x="127" y="754">50</text>
<text transform="translate(118 772) rotate(-90)" style="font-size:11px;font-weight:bold;fill:#d8d8d8" textLength="66" lengthAdjust="spacingAndGlyphs">AS TERJUAL</text>

<rect x="243" y="667.7" width="35" height="104.3" fill="#d94540"/><rect x="243" y="667.7" width="35" height="104.3" fill="url(#edge)"/>
<path d="M243 667.7 H278 L274 673.5 H247 Z" fill="#ef7a75"/>
<rect x="314" y="661.7" width="35.5" height="110.3" fill="#a8d04a"/><rect x="314" y="661.7" width="35.5" height="110.3" fill="url(#edge)"/>
<path d="M314 661.7 H349.5 L345.5 667.5 H318 Z" fill="#d4ea88"/>
<rect x="385" y="700" width="35" height="72" fill="#8860b4"/><rect x="385" y="700" width="35" height="72" fill="url(#edge)"/>
<path d="M385 700 H420 L416 705.5 H389 Z" fill="#b595dc"/>
<rect x="456.6" y="742" width="35.4" height="30" fill="#38bfe6"/><rect x="456.6" y="742" width="35.4" height="30" fill="url(#edge)"/>
<path d="M456.6 742 H492 L488 747.5 H460.6 Z" fill="#84e0f6"/>
<rect x="527.5" y="752.3" width="35.5" height="19.7" fill="#fb9a33"/><rect x="527.5" y="752.3" width="35.5" height="19.7" fill="url(#edge)"/>
<path d="M527.5 752.3 H563 L559 757.5 H531.5 Z" fill="#fdc480"/>
<rect x="599.5" y="697.7" width="35.5" height="74.3" fill="#1f5088"/><rect x="599.5" y="697.7" width="35.5" height="74.3" fill="url(#edge)"/>
<path d="M599.5 697.7 H635 L631 703.5 H603.5 Z" fill="#4e7fb8"/>

<path d="M1019 772 V603 A14 14 0 0 1 1033 589 H1575 V772 Z" fill="url(#cbg2)"/>
<text x="1165.3" y="623" style="font-size:22px;font-weight:bold;fill:#f2f2f2;letter-spacing:1px" textLength="325" lengthAdjust="spacingAndGlyphs">Segmentasi Pelanggan (RFM)</text>
<path d="M1329.6 772 V647 A142 142 0 0 1 1470.6 772 Z" fill="url(#pb)" stroke="#2c5f9e" stroke-width="1"/>
<path d="M1329.6 772 H1312.6 L1229.2 688.6 A142 142 0 0 1 1329.6 647 Z" fill="url(#pg)" stroke="#7d9d36" stroke-width="1"/>
<path d="M1312.6 772 L1229.2 688.6 A142 142 0 0 0 1188.6 772 Z" fill="url(#pr)" stroke="#a8332f" stroke-width="1"/>
<path d="M1332 649 A140 140 0 0 1 1468 771" fill="none" stroke="#6aa6ec" stroke-width="1.5" opacity=".35"/>
<path d="M1232 690 A140 140 0 0 1 1328 649" fill="none" stroke="#c9e67a" stroke-width="2" opacity=".5"/>
<path d="M1229.2 688.6 L1312 771" stroke="#ef6e68" stroke-width="2.5" fill="none"/>
<path d="M1228 691 A140 140 0 0 0 1190 771" fill="none" stroke="#ee6e68" stroke-width="2" opacity=".6"/>
<text x="1282" y="678" style="font-size:12px;fill:#dfe8c8;text-anchor:middle">13%</text>
<text x="1416" y="708.5" style="font-size:12px;fill:#dce8f6;text-anchor:middle">25%</text>
</g>

<!-- Vertical scrollbar -->
<rect x="1575" y="270" width="25" height="502" fill="#f0f0f0"/>
<path d="M1588 276 L1593 285 H1583 Z" fill="#6e6e6e"/>
<rect x="1583" y="292" width="10.5" height="118" rx="5" fill="#6e6e6e"/>
<path d="M1588 769 L1583 760 H1593 Z" fill="#6e6e6e"/>

<!-- Tabs -->
<rect x="0" y="772" width="1600" height="40" fill="#f0f0f0"/>
<path d="M36 786 L30 792 L36 798" fill="none" stroke="#999" stroke-width="1.3"/>
<path d="M71 786 L77 792 L71 798" fill="none" stroke="#444" stroke-width="1.4"/>
<path d="M138 772 H331.6 V804 Q331.6 808 327 808 H143 Q138 808 138 804 Z" fill="#fff"/>
<text class="tab" x="149" y="796" textLength="171.4" lengthAdjust="spacingAndGlyphs">DASHBOARD UTAMA</text>
<rect x="148.5" y="801" width="172.5" height="2.5" fill="#217346"/>
<g stroke="#d8d8d8"><path d="M336.7 782 V803 M509.7 782 V803 M694 782 V803 M859.7 782 V803"/></g>
<text class="tab" x="355" y="800" textLength="136" lengthAdjust="spacingAndGlyphs">DATA TRANSAKSI</text>
<text class="tab" x="528.6" y="800" textLength="147.4" lengthAdjust="spacingAndGlyphs">DATA PELANGGAN</text>
<text class="tab" x="711" y="800" textLength="130.8" lengthAdjust="spacingAndGlyphs">DATA FEEDBACK</text>
<g fill="#444"><circle cx="879" cy="791.5" r="1.7"/><circle cx="884" cy="791.5" r="1.7"/><circle cx="889" cy="791.5" r="1.7"/></g>
<path d="M924 784 V799 M916.5 791.5 H931.5" stroke="#444" stroke-width="1.3"/>
<g fill="#444"><circle cx="964.3" cy="785.5" r="1.4"/><circle cx="964.3" cy="791.5" r="1.4"/><circle cx="964.3" cy="797.5" r="1.4"/></g>
<rect x="986" y="781.5" width="589" height="20.5" rx="10" fill="#f5f5f5"/>
<path d="M991 791.7 L999 785.5 V798 Z" fill="#555"/>
<rect x="1006.6" y="786.7" width="467" height="10" rx="5" fill="#6e6e6e"/>
<path d="M1571 791.7 L1563 785.5 V798 Z" fill="#555"/>

<!-- Status bar -->
<rect x="0" y="812" width="1600" height="28" fill="#f5f5f5"/>
<text x="14" y="831.5" style="font-size:13.5px;fill:#444" textLength="35" lengthAdjust="spacingAndGlyphs">Ready</text>
<circle cx="82" cy="818.5" r="2.6" fill="none" stroke="#444" stroke-width="1.1"/>
<path d="M74 821 L80 823 H85 L91 821 M80 823 L81 829 L76 837 M85 823 L84 829 L88 835" fill="none" stroke="#444" stroke-width="1.1"/>
<path d="M86 830 L92 837 M92 830 L86 837" stroke="#444" stroke-width="1.1"/>
<text x="96" y="831.5" style="font-size:13.5px;font-weight:bold;fill:#333" textLength="156.6" lengthAdjust="spacingAndGlyphs">Accessibility: Investigate</text>
<rect x="1229" y="813" width="50" height="27" fill="#e0e0e0"/>
<g fill="none" stroke="#444" stroke-width="1.1">
<rect x="1245.5" y="819" width="16.5" height="15"/>
<path d="M1251 819 V834 M1256.5 819 V834 M1245.5 824 H1262 M1245.5 829 H1262"/>
<rect x="1296" y="818.5" width="16" height="16"/>
<rect x="1299" y="821.5" width="10" height="10"/>
<path d="M1301 824 H1307 M1301 827 H1307 M1301 829.5 H1307"/>
<path d="M1345.5 818 H1363 V834.5 H1345.5 Z M1345.5 828 H1363 M1350 818 V828 M1358.5 818 V828"/>
</g>
<path d="M1386.5 826 H1393.5" stroke="#444" stroke-width="1.2"/>
<path d="M1402 826 H1524.5" stroke="#555" stroke-width="1.2"/>
<rect x="1455.6" y="819" width="6.4" height="15" fill="#555"/>
<path d="M1464 821 V831" stroke="#555" stroke-width="1.2"/>
<path d="M1531 826 H1541 M1536 821 V831" stroke="#444" stroke-width="1.2"/>
<text x="1557.6" y="831" style="font-size:13.5px;fill:#444" textLength="25.4" lengthAdjust="spacingAndGlyphs">90%</text>
</svg>
</body>
</html>
